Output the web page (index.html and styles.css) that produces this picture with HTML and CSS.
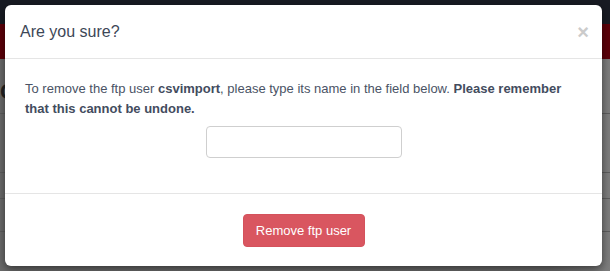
FILE: index.html
```html
<!DOCTYPE html>
<html>
<head>
<meta charset="utf-8">
<link rel="stylesheet" href="styles.css">
</head>
<body>
<div class="page">
  <div class="topbar"></div>
  <div class="redbar"></div>
  <div class="content">
    <div class="heading">C</div>
    <div class="row r1"></div>
    <div class="row r2"></div>
    <div class="row r3"></div>
    <div class="row r4"></div>
  </div>
</div>
<div class="modal">
  <div class="modal-header">
    <h4 class="modal-title">Are you sure?</h4>
    <span class="close">&times;</span>
  </div>
  <div class="modal-body">
    <p class="msg">To remove the ftp user <b>csvimport</b>, please type its name in the field below. <b>Please remember that this cannot be undone.</b></p>
    <div class="field"><input class="input" type="text"></div>
  </div>
  <div class="modal-footer">
    <button class="btn-danger">Remove ftp user</button>
  </div>
</div>
</body>
</html>
```

FILE: styles.css
```css
html, body {
  margin: 0;
  padding: 0;
}
body {
  width: 610px;
  height: 271px;
  overflow: hidden;
  position: relative;
  font-family: "Liberation Sans", Arial, sans-serif;
  background: #6f6f6f;
}
.page {
  display: flex;
  flex-direction: column;
  height: 271px;
}
.topbar {
  height: 24px;
  background: #181b23;
}
.redbar {
  height: 35px;
  background: #5c0009;
}
.content {
  flex: 1;
  background: linear-gradient(90deg, #6a6a6a 0%, #6b6b6b 90%, #7d7d7d 100%);
  padding-top: 20px;
  display: flex;
  flex-direction: column;
}
.heading {
  color: #222;
  font-size: 22px;
  font-weight: bold;
  height: 34px;
}
.row {
  border-top: 1px solid #5c5c5c;
}
.r1 { height: 58px; }
.r2 { height: 25px; }
.r3 { height: 32px; }
.r4 { height: 20px; }
.modal {
  position: absolute;
  left: 5px;
  top: 5px;
  width: 597px;
  height: 261px;
  background: #fff;
  border-radius: 6px;
  box-shadow: 0 3px 9px rgba(0,0,0,0.5);
  display: flex;
  flex-direction: column;
}
.modal-header {
  height: 54px;
  box-sizing: border-box;
  border-bottom: 1px solid #e5e5e5;
  padding: 0 15px;
  display: flex;
  align-items: center;
  justify-content: space-between;
}
.modal-title {
  margin: 0;
  font-size: 16px;
  font-weight: normal;
  color: #3d4757;
}
.close {
  font-size: 20px;
  font-weight: bold;
  color: #cbcbcb;
  line-height: 1;
  margin-right: -2px;
}
.modal-body {
  height: 134px;
  box-sizing: border-box;
  padding: 20px 20px 0;
}
.msg {
  margin: 0;
  font-size: 13px;
  line-height: 20px;
  color: #4a5365;
}
.msg b {
  color: #434c5e;
}
.field {
  display: flex;
  justify-content: center;
  margin-top: 7px;
}
.input {
  width: 196px;
  height: 32px;
  box-sizing: border-box;
  border: 1px solid #cfcfcf;
  border-radius: 4px;
  outline: none;
}
.modal-footer {
  flex: 1;
  border-top: 1px solid #e5e5e5;
  display: flex;
  justify-content: center;
  align-items: flex-start;
  padding-top: 20px;
}
.btn-danger {
  font-family: "Liberation Sans", Arial, sans-serif;
  font-size: 13px;
  color: #fff;
  background: #d95660;
  border: 1px solid #d4525c;
  border-radius: 4px;
  height: 33px;
  width: 122px;
  padding: 0;
}
```
